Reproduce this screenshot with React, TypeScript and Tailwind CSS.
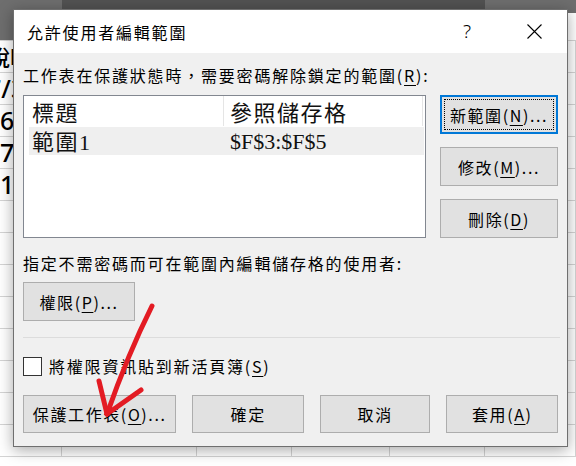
import React from "react";

const cjk = '"Noto Sans CJK TC", "Noto Sans", sans-serif';

function Btn({ children, className = "", focused = false }: { children: React.ReactNode; className?: string; focused?: boolean }) {
  return (
    <div
      className={
        "relative flex items-center justify-center bg-[#e1e1e1] text-[16px] tracking-[1.6px] text-black " +
        (focused ? "border-2 border-[#0078d7] " : "border border-[#adadad] ") +
        className
      }
    >
      {focused && <div className="absolute inset-[2px] border border-dotted border-black" />}
      <span className="relative">{children}</span>
    </div>
  );
}

function U({ children }: { children: React.ReactNode }) {
  return <span className="underline decoration-1 underline-offset-[3px]">{children}</span>;
}

export default function App() {
  const rows = Array.from({ length: 13 });
  const cols = [62, 135, 95, 98, 95, 91];
  const leftTexts: Record<number, React.ReactNode> = {
    0: <span className="-ml-[12px] text-[22px] leading-[24px]">說明</span>,
    1: <span className="-ml-[13px]">7/3</span>,
    2: <span>6</span>,
    3: <span>7</span>,
    4: <span>1</span>,
  };
  return (
    <div className="relative w-[576px] h-[466px] overflow-hidden bg-white" style={{ fontFamily: cjk }}>
      {/* spreadsheet behind */}
      <div className="absolute inset-0 flex flex-col">
        <div className="h-[13px] flex">
          <div className="w-[62px] bg-[#6e6e6e]" />
          <div className="w-[423px] bg-[#525252]" />
          <div className="flex-1 bg-[#6e6e6e]" />
        </div>
        <div className="h-[28px] flex border-b border-[#d4d4d4]">
          <div className="w-[62px] bg-[#6e6e6e]" />
          <div className="flex-1 bg-white" />
        </div>
        {rows.map((_, r) => (
          <div key={r} className="h-[32px] flex border-b border-[#d4d4d4] shrink-0">
            {cols.map((w, c) => (
              <div
                key={c}
                className="h-full border-r border-[#d4d4d4] flex items-center overflow-hidden text-[25px] font-medium text-black"
                style={{ width: w, fontFamily: '"Noto Sans", "Noto Sans CJK TC", sans-serif' }}
              >
                {c === 0 ? leftTexts[r] ?? null : null}
              </div>
            ))}
          </div>
        ))}
      </div>

      {/* dialog */}
      <div className="absolute left-[13px] top-[9px] w-[555px] h-[438px] border border-[#6f6f6f] bg-[#f0f0f0] shadow-[0_3px_14px_rgba(0,0,0,0.35)] flex flex-col text-black">
        <div className="h-[43px] bg-white flex items-center pl-[13px] pr-[25px] shrink-0">
          <div className="flex-1 text-[16px] tracking-[1.8px]">允許使用者編輯範圍</div>
          <div className="text-[19px] font-light mr-[56px]" style={{ fontFamily: '"Noto Sans", sans-serif' }}>?</div>
          <svg width="15" height="15" viewBox="0 0 15 15">
            <path d="M0.5 0.5 L14.5 14.5 M14.5 0.5 L0.5 14.5" stroke="#000" strokeWidth="1.1" fill="none" />
          </svg>
        </div>
        <div className="flex-1 flex flex-col px-[9px] pt-[11px] pb-[13px]">
          <div className="h-[22px] leading-[22px] text-[16px] tracking-[1.8px]">
            工作表在保護狀態時，需要密碼解除鎖定的範圍(<U>R</U>):
          </div>
          <div className="mt-[9px] flex gap-[14px]">
            <div className="w-[403px] h-[143px] border border-[#828790] bg-white flex flex-col">
              <div className="h-[30px] flex items-center text-[22px] tracking-[1.5px] text-[#111]">
                <div className="w-[199px] pl-[8px] h-full flex items-center">標題</div>
                <div className="w-px h-full bg-[#e5e5e5]" />
                <div className="w-[198px] pl-[6px] h-full flex items-center">參照儲存格</div>
                <div className="w-px h-full bg-[#e5e5e5]" />
              </div>
              <div className="mt-[1px] ml-[5px] w-[395px] h-[28px] bg-[#efefef] flex items-center text-[22px] text-[#111]">
                <div className="w-[194px] pl-[3px] flex items-baseline">
                  <span className="tracking-[1.5px]">範圍</span>
                  <span style={{ fontFamily: '"Liberation Serif", serif' }}>1</span>
                </div>
                <div className="pl-[7px]" style={{ fontFamily: '"Liberation Serif", serif' }}>$F$3:$F$5</div>
              </div>
            </div>
            <div className="w-[118px] h-[143px] flex flex-col justify-between">
              <Btn focused className="h-[39px]">新範圍(<U>N</U>)...</Btn>
              <Btn className="h-[39px]">修改(<U>M</U>)...</Btn>
              <Btn className="h-[39px]">刪除(<U>D</U>)</Btn>
            </div>
          </div>
          <div className="mt-[14px] h-[22px] leading-[22px] text-[16px] tracking-[1.8px]">
            指定不需密碼而可在範圍內編輯儲存格的使用者:
          </div>
          <Btn className="mt-[8px] w-[112px] h-[39px]">權限(<U>P</U>)...</Btn>
          <div className="mt-[16px] h-px w-[537px] bg-[#dcdcdc]" />
          <div className="mt-[17px] h-[22px] flex items-center gap-[7px]">
            <div className="w-[19px] h-[19px] border border-[#333] bg-white" />
            <div className="text-[16px] tracking-[1.8px] leading-[22px]">將權限資訊貼到新活頁簿(<U>S</U>)</div>
          </div>
          <div className="mt-[18px] flex gap-[16px]">
            <Btn className="w-[154px] h-[38px]">保護工作表(<U>O</U>)...</Btn>
            <Btn className="w-[112px] h-[38px]">確定</Btn>
            <Btn className="w-[111px] h-[38px]">取消</Btn>
            <Btn className="w-[112px] h-[38px]">套用(<U>A</U>)</Btn>
          </div>
        </div>
      </div>

      {/* red arrow annotation */}
      <svg className="absolute inset-0 pointer-events-none" width="576" height="466" viewBox="0 0 576 466">
        <g stroke="#e31b23" strokeWidth="5" strokeLinecap="round" strokeLinejoin="round" fill="none">
          <path d="M152 306 Q128 354 107 414" />
          <path d="M99 381 L107 414" />
          <path d="M107 414 L141 390" />
        </g>
      </svg>
    </div>
  );
}
